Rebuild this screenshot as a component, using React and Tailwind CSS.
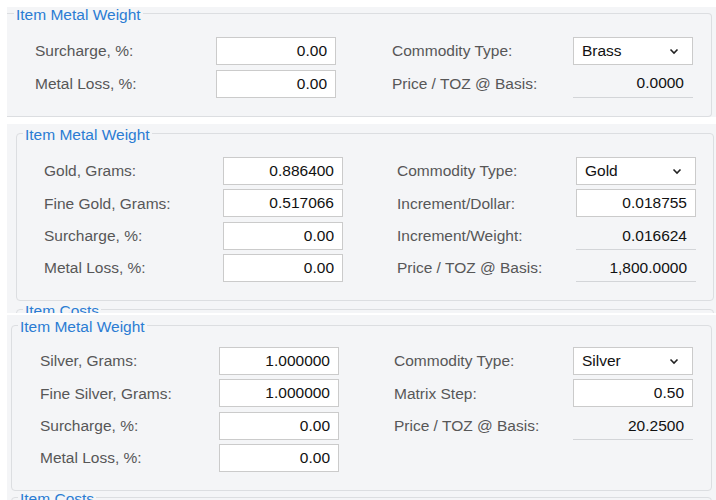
import React from "react";

const font = "font-['Liberation_Sans',Arial,sans-serif] text-[15.5px]";

function Label({ text }) {
  return <div className="flex h-[28px] items-center whitespace-nowrap text-[#575757]">{text}</div>;
}

function NumInput({ value }) {
  return (
    <input
      readOnly
      value={value}
      className="h-[28px] w-[120px] border border-[#cbcbcb] bg-white pr-[8px] text-right text-[#111] outline-none"
    />
  );
}

function Select({ value }) {
  return (
    <div className="flex h-[28px] w-[120px] items-center justify-between border border-[#cbcbcb] bg-white pl-[8px] pr-[13px] text-[#111]">
      <span>{value}</span>
      <svg width="10" height="7" viewBox="0 0 10 7" fill="none">
        <path d="M1.5 1.5l3.5 3.5 3.5-3.5" stroke="#222" strokeWidth="1.6" />
      </svg>
    </div>
  );
}

function Static({ value }) {
  return (
    <div className="flex h-[28px] w-[120px] items-center justify-end border-b border-[#d3d5d8] pr-[9px] text-[#111]">
      {value}
    </div>
  );
}

function Cell({ item }) {
  if (!item) return <div />;
  if (item.kind === "select") return <Select value={item.value} />;
  if (item.kind === "static") return <Static value={item.value} />;
  return <NumInput value={item.value} />;
}

function Legend({ text, className }) {
  return (
    <legend className={"px-[2px] pt-[3px] leading-[10px] text-[#2b7cd3] " + className}>{text}</legend>
  );
}

// label | field | label | field, the space after the first field sits inside its column
function Rows({ left, right, gridClass }) {
  const n = Math.max(left.length, right.length);
  const cells = [];
  for (let i = 0; i < n; i++) {
    const l = left[i];
    const r = right[i];
    cells.push(
      <React.Fragment key={i}>
        {l ? <Label text={l.label} /> : <div />}
        <div>
          <Cell item={l} />
        </div>
        {r ? <Label text={r.label} /> : <div />}
        <Cell item={r} />
      </React.Fragment>
    );
  }
  return <div className={gridClass}>{cells}</div>;
}

export default function App() {
  return (
    <div className={"h-[500px] overflow-hidden bg-white " + font}>
      {/* brass */}
      <div className="ml-[7px] mt-[7px] h-[110px] bg-[#f4f5f7]">
        <fieldset className="mr-[4px] rounded-r-[4px] border border-l-0 border-[#dcdee1]">
          <Legend text="Item Metal Weight" className="ml-[7px]" />
          <div className="pb-[18.5px] pl-[28px] pt-[17px]">
            <Rows
              gridClass="grid grid-cols-[181px_176px_181px_120px] gap-y-[4.5px]"
              left={[
                { label: "Surcharge, %:", value: "0.00" },
                { label: "Metal Loss, %:", value: "0.00" },
              ]}
              right={[
                { label: "Commodity Type:", value: "Brass", kind: "select" },
                { label: "Price / TOZ @ Basis:", value: "0.0000", kind: "static" },
              ]}
            />
          </div>
        </fieldset>
      </div>

      {/* gold */}
      <div className="ml-[7px] mt-[7px] h-[189px] overflow-hidden bg-[#f4f5f7]">
        <fieldset className="ml-[9px] mr-[2px] mt-[3px] rounded-[4px] border border-[#dcdee1]">
          <Legend text="Item Metal Weight" className="ml-[6px]" />
          <div className="pb-[18px] pl-[27px] pt-[17px]">
            <Rows
              gridClass="grid grid-cols-[179px_174px_179px_120px] gap-y-[4.33px]"
              left={[
                { label: "Gold, Grams:", value: "0.886400" },
                { label: "Fine Gold, Grams:", value: "0.517066" },
                { label: "Surcharge, %:", value: "0.00" },
                { label: "Metal Loss, %:", value: "0.00" },
              ]}
              right={[
                { label: "Commodity Type:", value: "Gold", kind: "select" },
                { label: "Increment/Dollar:", value: "0.018755" },
                { label: "Increment/Weight:", value: "0.016624", kind: "static" },
                { label: "Price / TOZ @ Basis:", value: "1,800.0000", kind: "static" },
              ]}
            />
          </div>
        </fieldset>
        <fieldset className="ml-[9px] mr-[2px] mt-[2px] h-[40px] rounded-[4px] border border-[#dcdee1]">
          <Legend text="Item Costs" className="ml-[6px]" />
        </fieldset>
      </div>

      {/* silver */}
      <div className="ml-[7px] mt-[2px] h-[200px] overflow-hidden bg-[#f4f5f7]">
        <fieldset className="ml-[4px] mr-[4px] mt-[3.5px] rounded-[4px] border border-[#dcdee1]">
          <Legend text="Item Metal Weight" className="ml-[6px]" />
          <div className="pb-[18px] pl-[28px] pt-[15.5px]">
            <Rows
              gridClass="grid grid-cols-[179px_175px_179px_120px] gap-y-[4.33px]"
              left={[
                { label: "Silver, Grams:", value: "1.000000" },
                { label: "Fine Silver, Grams:", value: "1.000000" },
                { label: "Surcharge, %:", value: "0.00" },
                { label: "Metal Loss, %:", value: "0.00" },
              ]}
              right={[
                { label: "Commodity Type:", value: "Silver", kind: "select" },
                { label: "Matrix Step:", value: "0.50" },
                { label: "Price / TOZ @ Basis:", value: "20.2500", kind: "static" },
              ]}
            />
          </div>
        </fieldset>
        <fieldset className="ml-[4px] mr-[4px] h-[40px] rounded-[4px] border border-[#dcdee1]">
          <Legend text="Item Costs" className="ml-[6px]" />
        </fieldset>
      </div>
    </div>
  );
}
